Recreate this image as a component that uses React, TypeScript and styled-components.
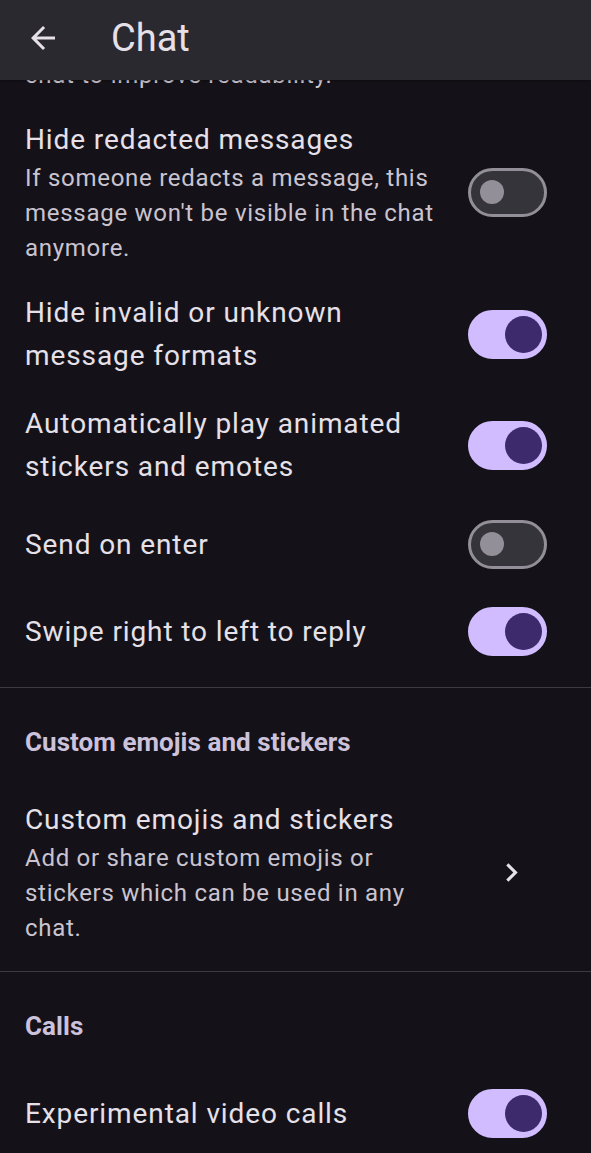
import type { ReactNode } from "react"
import styled, { createGlobalStyle } from "styled-components"

const GlobalStyle = createGlobalStyle`
    html, body {
        margin: 0;
        padding: 0;
        background: #141218;
    }
    body {
        font-family: Roboto, "Noto Sans", sans-serif;
        -webkit-font-smoothing: antialiased;
    }
`

const Page = styled.div`
    width: 591px;
    height: 1153px;
    display: flex;
    flex-direction: column;
    background: #141218;
    overflow: hidden;
`

const AppBar = styled.header`
    height: 80px;
    flex: none;
    box-sizing: border-box;
    display: flex;
    align-items: center;
    gap: 50px;
    padding: 0 0 5px 25px;
    background: #2b2930;
    box-shadow: 0 1px 2px rgba(0, 0, 0, 0.35);
    position: relative;
    z-index: 1;
`

const BackButton = styled.button`
    width: 36px;
    height: 36px;
    padding: 0;
    border: 0;
    background: none;
    color: #e6e0e9;
    display: flex;
    align-items: center;
    justify-content: center;
`

const BarTitle = styled.h1`
    margin: 0;
    font-size: 38px;
    font-weight: 400;
    color: #e6e0e9;
`

const Content = styled.main`
    flex: 1;
    overflow: hidden;
    display: flex;
    flex-direction: column;
`

// the item that is already scrolled under the app bar
const ScrolledOff = styled.div`
    height: 25.5px;
    flex: none;
    overflow: hidden;
    display: flex;
    flex-direction: column;
    justify-content: flex-end;
`

const Item = styled.div`
    flex: none;
    display: flex;
    align-items: center;
    gap: 28px;
    min-height: 87px;
    box-sizing: border-box;
    padding: 12.5px 44px 12.5px 25px;
`

const Texts = styled.div`
    flex: 1;
    min-width: 0;
`

const Title = styled.div`
    font-size: 28px;
    line-height: 43px;
    letter-spacing: 0.9px;
    color: #e6e0e9;
`

const Subtitle = styled.div`
    font-size: 24px;
    line-height: 35px;
    letter-spacing: 0.72px;
    color: #cac4d0;
`

const SectionTitle = styled.div`
    font-size: 26px;
    line-height: 43px;
    font-weight: 700;
    letter-spacing: 0.05px;
    color: #ccc2dc;
`

const Divider = styled.hr`
    flex: none;
    width: 100%;
    margin: 12px 0 11px;
    border: 0;
    border-top: 1px solid #3d3a43;
`

const Track = styled.span<{ $on: boolean }>`
    flex: none;
    width: 79px;
    height: 49px;
    box-sizing: border-box;
    border-radius: 25px;
    border: 3px solid ${p => (p.$on ? "#d0bcff" : "#938f99")};
    background: ${p => (p.$on ? "#d0bcff" : "#36343b")};
    display: flex;
    align-items: center;
    justify-content: ${p => (p.$on ? "flex-end" : "flex-start")};
    padding: ${p => (p.$on ? "0 2.5px" : "0 9px")};
`

const Thumb = styled.span<{ $on: boolean }>`
    width: ${p => (p.$on ? "37px" : "24px")};
    height: ${p => (p.$on ? "37px" : "24px")};
    border-radius: 50%;
    background: ${p => (p.$on ? "#3c2a6c" : "#938f99")};
`

const Trailing = styled.span`
    flex: none;
    width: 79px;
    display: flex;
    justify-content: center;
    padding-left: 7px;
    box-sizing: border-box;
    color: #e6e0e9;
`

const Switch = ({ on }: { on: boolean }) => (
    <Track $on={on}>
        <Thumb $on={on} />
    </Track>
)

type Setting = { title: string; subtitle?: ReactNode; on: boolean }

const SwitchItem = ({ title, subtitle, on }: Setting) => (
    <Item>
        <Texts>
            <Title>{title}</Title>
            {subtitle && <Subtitle>{subtitle}</Subtitle>}
        </Texts>
        <Switch on={on} />
    </Item>
)

const chatSettings: Setting[] = [
    {
        title: "Hide redacted messages",
        subtitle: "If someone redacts a message, this message won't be visible in the chat anymore.",
        on: false,
    },
    { title: "Hide invalid or unknown message formats", on: true },
    { title: "Automatically play animated stickers and emotes", on: true },
    { title: "Send on enter", on: false },
    { title: "Swipe right to left to reply", on: true },
]

const App = () => {
    return (
        <>
            <GlobalStyle />
            <Page>
                <AppBar>
                    <BackButton aria-label="Back">
                        <svg width="36" height="36" viewBox="0 0 24 24" fill="currentColor">
                            <path d="M20 11H7.83l5.59-5.59L12 4l-8 8 8 8 1.41-1.41L7.83 13H20v-2z" />
                        </svg>
                    </BackButton>
                    <BarTitle>Chat</BarTitle>
                </AppBar>
                <Content>
                    <ScrolledOff>
                        <SwitchItem
                            title="Hide member changes in public chats"
                            subtitle={
                                <>
                                    Do not show in the chat timeline if someone joins or leaves a public
                                    <br />
                                    chat to improve readability.
                                </>
                            }
                            on={false}
                        />
                    </ScrolledOff>
                    {chatSettings.map(s => (
                        <SwitchItem key={s.title} {...s} />
                    ))}
                    <Divider />
                    <Item>
                        <SectionTitle>Custom emojis and stickers</SectionTitle>
                    </Item>
                    <Item>
                        <Texts>
                            <Title>Custom emojis and stickers</Title>
                            <Subtitle>Add or share custom emojis or stickers which can be used in any chat.</Subtitle>
                        </Texts>
                        <Trailing>
                            <svg width="37" height="37" viewBox="0 0 24 24" fill="currentColor">
                                <path d="M10 6L8.59 7.41 13.17 12l-4.58 4.59L10 18l6-6z" />
                            </svg>
                        </Trailing>
                    </Item>
                    <Divider />
                    <Item>
                        <SectionTitle>Calls</SectionTitle>
                    </Item>
                    <SwitchItem title="Experimental video calls" on={true} />
                </Content>
            </Page>
        </>
    )
}

export default App
